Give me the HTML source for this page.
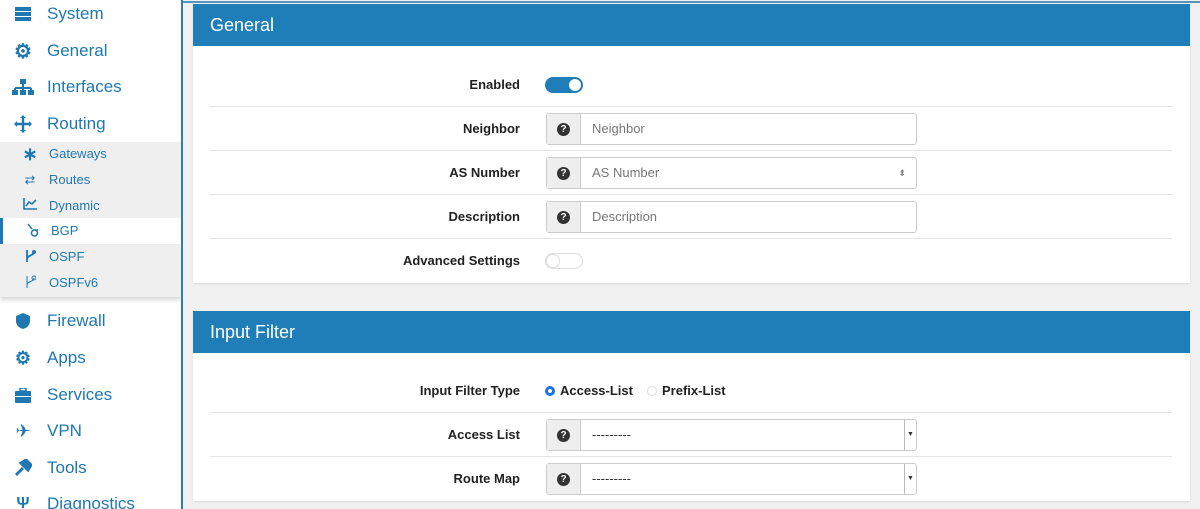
<!DOCTYPE html><html><head><style>
*{box-sizing:border-box;margin:0;padding:0}
html,body{width:1200px;height:509px;overflow:hidden}
body{background:#f1f1f1;font-family:"Liberation Sans",sans-serif;position:relative}
.side{position:absolute;left:0;top:0;width:183px;height:509px;background:#fff;border-right:2px solid #2a7fb4;overflow:hidden}
.topline{position:absolute;left:0;top:1px;width:1200px;height:2px;background:#2a7fb4;opacity:.8}
.it{position:absolute;left:47px;font-size:17px;color:#1f78b0;line-height:20px}
.ic{position:absolute;left:12px;width:22px;height:20px;display:flex;align-items:center;justify-content:center;color:#1f78b0}
.sub{position:absolute;left:0;top:142px;width:181px;height:155px;background:#efefef;box-shadow:0 3px 4px rgba(0,0,0,.15)}
.si{position:absolute;left:49px;font-size:13px;color:#1f78b0;line-height:16px}
.sic{position:absolute;left:22px;width:16px;font-size:13px;color:#1f78b0;text-align:center;line-height:16px}
.panel{position:absolute;left:193px;width:997px;background:#fff;box-shadow:0 1px 2px rgba(0,0,0,.1)}
.ph{height:42px;background:#1f7db8;color:#fff;font-size:18px;padding:11px 17px;line-height:20px}
.row{position:absolute;left:17px;width:962px;border-top:1px solid #e4e4e4;height:44px}
.lbl{position:absolute;right:652px;width:300px;text-align:right;font-size:13px;font-weight:bold;color:#222;line-height:16px}
.grp{position:absolute;left:353px;width:371px;height:32px;border:1px solid #ccc;border-radius:3px;display:flex;background:#fff}
.add{width:34px;background:#eee;border-right:1px solid #ccc;display:flex;align-items:center;justify-content:center}
.q{width:13px;height:13px;border-radius:50%;background:#333;color:#fff;font-size:10px;font-weight:bold;text-align:center;line-height:13px}
.inp{flex:1;padding-left:11px;font-size:13px;color:#777;line-height:30px;position:relative}
.dd{position:absolute;right:0;top:0;width:12px;height:30px;border-left:1px solid #bbb;font-size:7px;text-align:center;line-height:30px;color:#333}
</style></head><body>
<div class="topline"></div>
<div class="side">
<div class="ic" style="top:4px"><svg width="18" height="16"><rect x="1" y="1" width="16" height="4" fill="#1f78b0"/><rect x="1" y="6" width="16" height="4" fill="#1f78b0"/><rect x="1" y="11" width="16" height="4" fill="#1f78b0"/></svg></div><div class="it" style="top:4px">System</div>
<div class="ic" style="top:41px;font-size:20px;font-weight:bold">⚙</div><div class="it" style="top:41px">General</div>
<div class="ic" style="top:77px"><svg width="22" height="16"><rect x="8" y="0" width="6" height="5" fill="#1f78b0"/><path d="M11 5v4M3 9h16M3 9v3M11 9v3M19 9v3" stroke="#1f78b0" stroke-width="2" fill="none"/><rect x="0" y="11" width="6" height="5" fill="#1f78b0"/><rect x="8" y="11" width="6" height="5" fill="#1f78b0"/><rect x="16" y="11" width="6" height="5" fill="#1f78b0"/></svg></div><div class="it" style="top:77px">Interfaces</div>
<div class="ic" style="top:114px"><svg width="20" height="20"><path d="M10 3v14M3 10h14" stroke="#1f78b0" stroke-width="2.4"/><path d="M10 1l-3 3h6zM10 19l-3-3h6zM1 10l3-3v6zM19 10l-3-3v6z" fill="#1f78b0"/></svg></div><div class="it" style="top:114px">Routing</div>
<div class="sub">
<div class="sic" style="top:4px;font-size:18px;font-weight:bold">∗</div><div class="si" style="top:4px">Gateways</div>
<div class="sic" style="top:30px">⇄</div><div class="si" style="top:30px">Routes</div>
<div class="sic" style="top:56px"><svg width="14" height="12"><path d="M1 0v11h13M3 8l3-4 3 2 4-4" stroke="#1f78b0" stroke-width="1.6" fill="none"/></svg></div><div class="si" style="top:56px">Dynamic</div>
<div style="position:absolute;left:0;top:76px;width:181px;height:26px;background:#fff;border-left:3px solid #1f78b0"></div>
<div class="sic" style="top:81px;left:25px"><svg width="12" height="14"><path d="M1 1l4 5M6 7h5M7 7a3 3 0 1 0 1 0" stroke="#1f78b0" stroke-width="1.5" fill="none"/></svg></div><div class="si" style="top:81px;left:51px">BGP</div>
<div class="sic" style="top:107px"><svg width="12" height="14"><path d="M3 1v12M3 10c0-4 7-3 7-7" stroke="#1f78b0" stroke-width="1.8" fill="none"/><circle cx="10" cy="3" r="2" fill="#1f78b0"/></svg></div><div class="si" style="top:107px">OSPF</div>
<div class="sic" style="top:133px"><svg width="12" height="14"><path d="M3 1v12M3 10c0-4 7-3 7-7" stroke="#1f78b0" stroke-width="1" fill="none"/><circle cx="10" cy="3" r="2" fill="none" stroke="#1f78b0"/></svg></div><div class="si" style="top:133px">OSPFv6</div>
</div>
<div class="ic" style="top:311px"><svg width="16" height="18"><path d="M8 1L1 4v5c0 4 3 7 7 8 4-1 7-4 7-8V4z" fill="#1f78b0"/></svg></div><div class="it" style="top:311px">Firewall</div>
<div class="ic" style="top:348px;font-size:18px;font-weight:bold">⚙</div><div class="it" style="top:348px">Apps</div>
<div class="ic" style="top:385px"><svg width="18" height="15"><rect x="1" y="3" width="16" height="12" rx="1" fill="#1f78b0"/><rect x="6" y="0" width="6" height="3" fill="none" stroke="#1f78b0" stroke-width="1.5"/><rect x="1" y="8" width="16" height="1" fill="#fff"/></svg></div><div class="it" style="top:385px">Services</div>
<div class="ic" style="top:421px;font-size:18px">✈</div><div class="it" style="top:421px">VPN</div>
<div class="ic" style="top:458px"><svg width="18" height="18"><path d="M2 16l7-7M7 4l5-3 5 5-3 5z" stroke="#1f78b0" stroke-width="3" fill="#1f78b0"/></svg></div><div class="it" style="top:458px">Tools</div>
<div class="ic" style="top:494px;font-weight:bold">Ψ</div><div class="it" style="top:494px">Diagnostics</div>
</div>

<div class="panel" style="top:4px;height:279px">
<div class="ph">General</div>
<div class="row" style="top:58px;border-top:none"><div class="lbl" style="top:15px">Enabled</div>
<div style="position:absolute;left:335px;top:15px;width:38px;height:16px;border-radius:8px;background:#1f7db8"><div style="position:absolute;right:2px;top:2px;width:12px;height:12px;border-radius:50%;background:#fff"></div></div></div>
<div class="row" style="top:102px"><div class="lbl" style="top:14px">Neighbor</div><div class="grp" style="top:6px;left:336px"><div class="add"><div class="q">?</div></div><div class="inp">Neighbor</div></div></div>
<div class="row" style="top:146px"><div class="lbl" style="top:14px">AS Number</div><div class="grp" style="top:6px;left:336px"><div class="add"><div class="q">?</div></div><div class="inp">AS Number<span style="position:absolute;right:10px;font-size:9px;color:#888">⬍</span></div></div></div>
<div class="row" style="top:190px"><div class="lbl" style="top:14px">Description</div><div class="grp" style="top:6px;left:336px"><div class="add"><div class="q">?</div></div><div class="inp">Description</div></div></div>
<div class="row" style="top:234px"><div class="lbl" style="top:14px">Advanced Settings</div>
<div style="position:absolute;left:335px;top:14px;width:38px;height:16px;border-radius:8px;border:1px solid #ddd;background:#fff"><div style="position:absolute;left:0;top:0;width:14px;height:14px;border-radius:50%;border:1px solid #ddd"></div></div></div>
</div>

<div class="panel" style="top:311px;height:190px">
<div class="ph">Input Filter</div>
<div class="row" style="top:58px;border-top:none"><div class="lbl" style="top:14px">Input Filter Type</div>
<div style="position:absolute;left:335px;top:14px;font-size:13px;font-weight:bold;color:#222;line-height:16px;display:flex;align-items:center"><span style="width:10px;height:10px;border-radius:50%;border:3px solid #1a73e8;display:inline-block;margin-right:5px"></span>Access-List<span style="width:10px;height:10px;border-radius:50%;border:1px solid #ddd;display:inline-block;margin:0 5px 0 14px"></span>Prefix-List</div></div>
<div class="row" style="top:101px"><div class="lbl" style="top:14px">Access List</div><div class="grp" style="top:6px;left:336px"><div class="add"><div class="q">?</div></div><div class="inp" style="color:#333">---------<div class="dd">▼</div></div></div></div>
<div class="row" style="top:145px"><div class="lbl" style="top:14px">Route Map</div><div class="grp" style="top:6px;left:336px"><div class="add"><div class="q">?</div></div><div class="inp" style="color:#333">---------<div class="dd">▼</div></div></div></div>
</div>
</body></html>
